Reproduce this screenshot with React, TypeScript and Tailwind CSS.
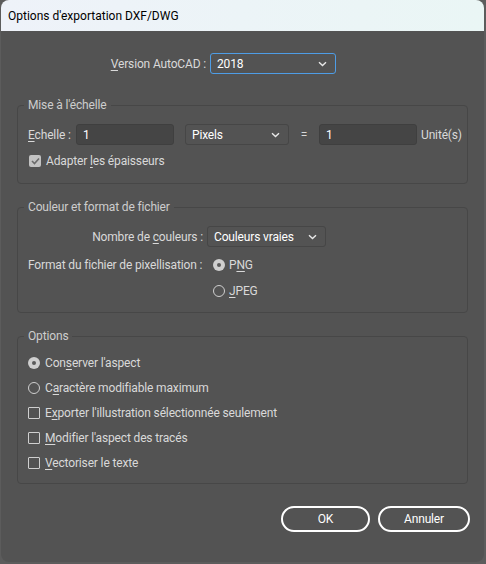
import React from "react";

const font = { fontFamily: 'Roboto, "Noto Sans", Arial, sans-serif' };

function U({ children }: { children: React.ReactNode }) {
  return <span className="underline underline-offset-2">{children}</span>;
}

function Chevron() {
  return (
    <svg width="9" height="6" viewBox="0 0 9 6" className="shrink-0">
      <path d="M1 1.2 L4.5 4.6 L8 1.2" fill="none" stroke="#e8e8e8" strokeWidth="1.4" />
    </svg>
  );
}

function Select({ value, width, focus }: { value: string; width: string; focus?: boolean }) {
  return (
    <div
      className={`${width} h-[21px] flex items-center justify-between pl-[6px] pr-[8px] rounded-[3px] border bg-[#535353] text-white ${
        focus ? "border-[#4e9de6]" : "border-[#464646]"
      }`}
    >
      <span>{value}</span>
      <Chevron />
    </div>
  );
}

function Input({ value }: { value: string }) {
  return (
    <div className="w-[98px] h-[21px] flex items-center pl-[6px] rounded-[3px] border border-[#3f3f3f] bg-[#454545] text-white">
      {value}
    </div>
  );
}

function Radio({ on }: { on?: boolean }) {
  return on ? (
    <span className="w-[12px] h-[12px] rounded-full bg-[#cfcfcf] flex items-center justify-center shrink-0">
      <span className="w-[4px] h-[4px] rounded-full bg-[#5a5a5a]" />
    </span>
  ) : (
    <span className="w-[12px] h-[12px] rounded-full border border-[#cfcfcf] shrink-0" />
  );
}

function Check({ on }: { on?: boolean }) {
  return on ? (
    <span className="w-[12px] h-[12px] rounded-[2px] bg-[#c2c2c2] flex items-center justify-center shrink-0">
      <svg width="9" height="8" viewBox="0 0 9 8">
        <path d="M1 4 L3.5 6.5 L8 1.5" fill="none" stroke="#6a6a6a" strokeWidth="1.6" />
      </svg>
    </span>
  ) : (
    <span className="w-[12px] h-[12px] rounded-[1px] border border-[#cfcfcf] shrink-0" />
  );
}

function Group({ title, children, className }: { title: string; children: React.ReactNode; className?: string }) {
  return (
    <fieldset className={`mx-[16px] border border-[#474747] rounded-[4px] ${className ?? ""}`}>
      <legend className="ml-[6px] px-[4px] h-[16px] leading-[16px] text-[#cdcdcd]">{title}</legend>
      {children}
    </fieldset>
  );
}

export default function App() {
  return (
    <div className="w-[486px] h-[564px] bg-[#5c5c5c] overflow-hidden" style={font}>
      <div className="ml-[1px] w-[483px] h-[562px] rounded-[8px] overflow-hidden bg-[#535353] text-[12px] tracking-[-0.15px] whitespace-nowrap text-[#d9d9d9] flex flex-col">
        {/* Title bar */}
        <div className="h-[31px] shrink-0 flex items-center pl-[7px] bg-gradient-to-r from-[#eef2f9] to-[#eaf6f5] text-black text-[12px] tracking-normal">
          Options d'exportation DXF/DWG
        </div>

        {/* Version */}
        <div className="mt-[22px] flex items-center h-[21px]">
          <div className="w-[205px] text-right">
            <U>V</U>ersion AutoCAD :
          </div>
          <div className="ml-[4px]">
            <Select value="2018" width="w-[126px]" focus />
          </div>
        </div>

        {/* Mise à l'échelle */}
        <Group title="Mise à l'échelle" className="mt-[23px] pb-[14px]">
          <div className="mt-[11px] flex items-center h-[21px] pl-[10px]">
            <div className="w-[48px]">
              <U>E</U>chelle :
            </div>
            <Input value="1" />
            <div className="ml-[11px]">
              <Select value="Pixels" width="w-[104px]" />
            </div>
            <div className="w-[30px] text-center">=</div>
            <Input value="1" />
            <div className="ml-[4px]">Unité(s)</div>
          </div>
          <div className="mt-[8px] flex items-center h-[16px] pl-[11px] gap-[5px]">
            <Check on />
            <span>
              Adapter <U>l</U>es épaisseurs
            </span>
          </div>
        </Group>

        {/* Couleur et format */}
        <Group title="Couleur et format de fichier" className="mt-[15px] pb-[13px]">
          <div className="mt-[11px] flex items-center h-[21px]">
            <div className="w-[189px] text-right pr-[4px]">
              Nombre de <U>c</U>ouleurs :
            </div>
            <Select value="Couleurs vraies" width="w-[119px]" />
          </div>
          <div className="mt-[10px] flex items-center h-[16px]">
            <div className="w-[195px] pl-[10px]">Format du fichier de pixellisation :</div>
            <Radio on />
            <span className="ml-[4px]">
              P<U>N</U>G
            </span>
          </div>
          <div className="mt-[10px] flex items-center h-[16px]">
            <div className="w-[195px]" />
            <Radio />
            <span className="ml-[4px]">
              <U>J</U>PEG
            </span>
          </div>
        </Group>

        {/* Options */}
        <Group title="Options" className="mt-[15px] pb-[12px]">
          <div className="mt-[11px] flex flex-col gap-[9px] pl-[10px]">
            <div className="flex items-center h-[16px] gap-[5px]">
              <Radio on />
              <span>
                Con<U>s</U>erver l'aspect
              </span>
            </div>
            <div className="flex items-center h-[16px] gap-[5px]">
              <Radio />
              <span>
                C<U>a</U>ractère modifiable maximum
              </span>
            </div>
            <div className="flex items-center h-[16px] gap-[5px]">
              <Check />
              <span>
                E<U>x</U>porter l'illustration sélectionnée seulement
              </span>
            </div>
            <div className="flex items-center h-[16px] gap-[5px]">
              <Check />
              <span>
                <U>M</U>odifier l'aspect des tracés
              </span>
            </div>
            <div className="flex items-center h-[16px] gap-[5px]">
              <Check />
              <span>
                <U>V</U>ectoriser le texte
              </span>
            </div>
          </div>
        </Group>

        {/* Buttons */}
        <div className="mt-[22px] flex justify-end gap-[8px] pr-[14px]">
          <button className="w-[89px] h-[26px] rounded-[13px] border-2 border-white text-white text-[12px]">OK</button>
          <button className="w-[92px] h-[26px] rounded-[13px] border-2 border-white text-white text-[12px]">Annuler</button>
        </div>
      </div>
    </div>
  );
}
